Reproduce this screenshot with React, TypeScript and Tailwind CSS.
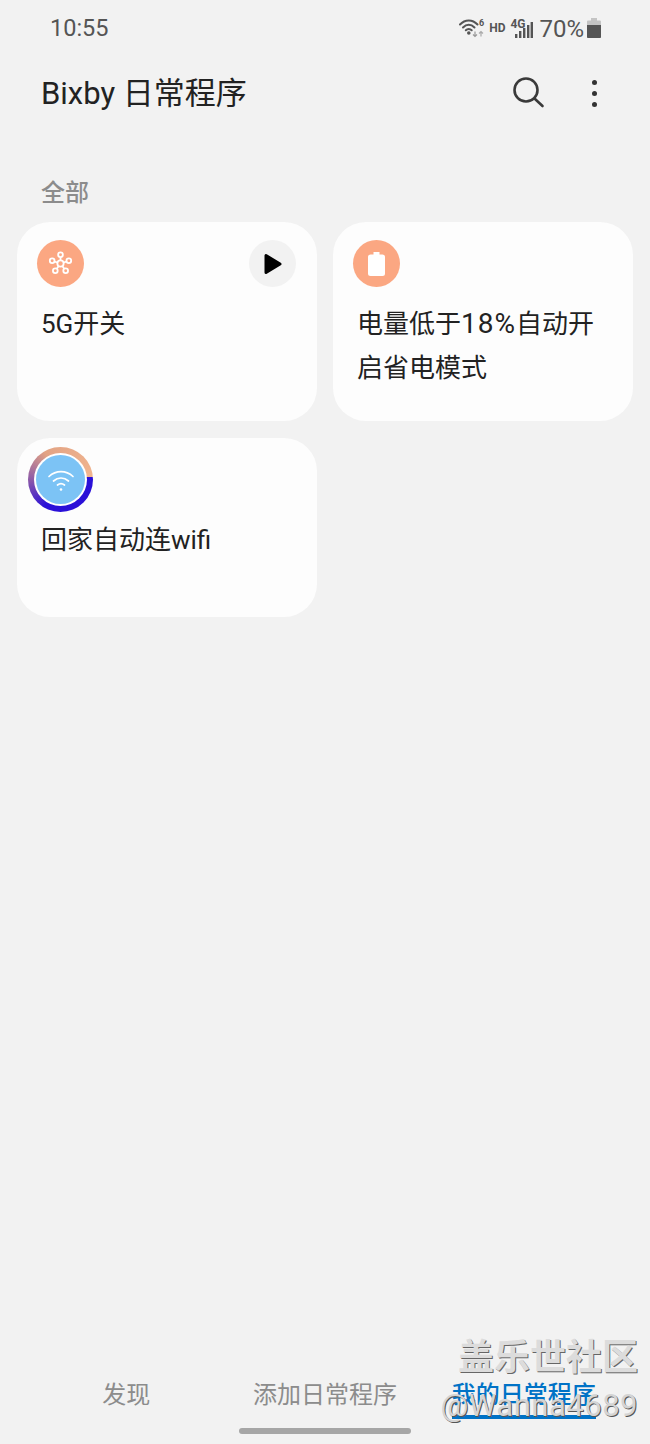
const cjk = "font-['Roboto','Noto_Sans_CJK_SC',sans-serif]"

function WifiStatus() {
  return (
    <svg width="26" height="20" viewBox="0 0 26 20" fill="none" className="text-[#555]">
      <g stroke="currentColor" strokeWidth="2" strokeLinecap="round">
        <path d="M1 6.500C6 1 13.500 1 18.500 6.500" />
        <path d="M4 9.500C7.500 5.800 12 5.800 15.500 9.500" />
        <path d="M6.800 12.300C8.500 10.600 11 10.600 12.700 12.300" />
      </g>
      <circle cx="9.800" cy="15" r="1.800" fill="currentColor" />
      <path d="M16 13.500v5M14 16.500l2 2 2-2" stroke="#999" strokeWidth="1.200" fill="none" />
      <path d="M22 18.500v-5M20 15.500l2-2 2 2" stroke="#aaa" strokeWidth="1.200" fill="none" />
      <text x="20" y="8" fontSize="9" fontWeight="700" fill="#555" fontFamily="Roboto, sans-serif">6</text>
    </svg>
  )
}

function SignalBars() {
  return (
    <svg width="18" height="16" viewBox="0 0 18 16" fill="#555">
      <rect x="0" y="12" width="2.400" height="4" />
      <rect x="4" y="9" width="2.400" height="7" />
      <rect x="8" y="6" width="2.400" height="10" />
      <rect x="12" y="3" width="2.400" height="13" />
      <rect x="15.600" y="0" width="2.400" height="16" />
    </svg>
  )
}

function HubIcon() {
  const spots = [
    [12, 4.2],
    [19.4, 9.6],
    [16.6, 18.4],
    [7.4, 18.4],
    [4.6, 9.6],
  ]
  return (
    <svg width="27" height="27" viewBox="0 0 24 24" fill="none" stroke="white" strokeWidth="1.600">
      {spots.map(([x, y]) => (
        <line key={x + "-" + y} x1="12" y1="12" x2={x} y2={y} />
      ))}
      <circle cx="12" cy="12" r="2.800" fill="#fba782" />
      {spots.map(([x, y]) => (
        <circle key={x + "/" + y} cx={x} cy={y} r="2.100" fill="#fba782" />
      ))}
    </svg>
  )
}

function Card({ height, icon, action, children }: { height: string; icon: React.ReactNode; action?: React.ReactNode; children: React.ReactNode }) {
  return (
    <div className={`${height} rounded-[33px] bg-[#fdfdfd] pt-[18px] pl-5 pr-[21px]`}>
      <div className="flex items-center justify-between">
        {icon}
        {action}
      </div>
      <p className="mt-[15px] pl-1 text-[26px] leading-[44px] text-[#222]">{children}</p>
    </div>
  )
}

export default function App() {
  return (
    <div className={`relative flex h-[1444px] w-[650px] flex-col overflow-hidden bg-[#f2f2f2] ${cjk}`}>
      {/* status bar */}
      <div className="flex h-[56px] items-center justify-between pl-[50px] pr-[49px] text-[#555]">
        <span className="mt-[2px] text-[23.500px]">10:55</span>
        <div className="flex items-center">
          <WifiStatus />
          <span className="ml-[4px] text-[12px] font-bold">HD</span>
          <div className="relative ml-[5px] h-[20px] w-[23px]">
            <span className="absolute left-0 top-[-3px] text-[12px] font-bold">4G</span>
            <div className="absolute bottom-0 right-0">
              <SignalBars />
            </div>
          </div>
          <span className="ml-[6px] mt-[1px] text-[24px]">70%</span>
          <svg width="14" height="20" viewBox="0 0 14 20" className="ml-[3px]">
            <path d="M4 0h6v2.500h3a1 1 0 0 1 1 1V19a1 1 0 0 1-1 1H1a1 1 0 0 1-1-1V3.500a1 1 0 0 1 1-1h3z" fill="#c4c4c4" />
            <path d="M0 7h14v12a1 1 0 0 1-1 1H1a1 1 0 0 1-1-1z" fill="#555" />
          </svg>
        </div>
      </div>

      {/* title row */}
      <div className="flex h-[74px] items-center justify-between pl-[41px] pr-[53px]">
        <h1 className="mt-[2px] text-[31px] font-normal text-[#222]">Bixby 日常程序</h1>
        <div className="flex items-center gap-[47px]">
          <svg width="34" height="34" viewBox="0 0 34 34" fill="none" stroke="#3a3a3a" strokeWidth="2.600" strokeLinecap="round">
            <circle cx="15" cy="14" r="11.500" />
            <line x1="23.500" y1="22.500" x2="31.500" y2="30" />
          </svg>
          <div className="flex flex-col gap-[6px]">
            <span className="h-[5px] w-[5px] rounded-full bg-[#333]" />
            <span className="h-[5px] w-[5px] rounded-full bg-[#333]" />
            <span className="h-[5px] w-[5px] rounded-full bg-[#333]" />
          </div>
        </div>
      </div>

      <h2 className="mt-[46px] pl-[41px] text-[24px] font-medium leading-[34px] text-[#8c8c8c]">全部</h2>

      <div className="mt-[12px] grid grid-cols-2 gap-x-4 gap-y-[17px] px-[17px]">
        <Card
          height="h-[199px]"
          icon={
            <div className="flex h-[47px] w-[47px] items-center justify-center rounded-full bg-[#fba782]">
              <HubIcon />
            </div>
          }
          action={
            <div className="flex h-[47px] w-[47px] items-center justify-center rounded-full bg-[#f2f2f2]">
              <svg width="18" height="22" viewBox="0 0 18 22">
                <path d="M2 2.500v17L16 11z" fill="black" stroke="black" strokeWidth="3" strokeLinejoin="round" />
              </svg>
            </div>
          }
        >
          5G开关
        </Card>
        <Card
          height="h-[199px]"
          icon={
            <div className="flex h-[47px] w-[47px] items-center justify-center rounded-full bg-[#fba782]">
              <svg width="17" height="24" viewBox="0 0 17 24" fill="white">
                <path d="M5.500 0h6v2.500h3a2.500 2.500 0 0 1 2.500 2.500v16.500a2.500 2.500 0 0 1-2.500 2.500h-12A2.500 2.500 0 0 1 0 21.500V5a2.500 2.500 0 0 1 2.500-2.500h3z" />
              </svg>
            </div>
          }
        >
          电量低于<span className="text-[28px] tracking-[1px]">18%</span>自动开启省电模式
        </Card>
        <Card
          height="h-[179px]"
          icon={
            <div className="relative flex h-[47px] w-[47px] items-center justify-center">
              {/* progress ring, runs past the icon */}
              <div className="absolute left-[-9px] top-[-9px] h-[65px] w-[65px] rounded-full bg-[conic-gradient(from_85deg,#2a10d8_0deg,#2a10d8_125deg,#8d5aa8_185deg,#e2a384_245deg,#f0b48f_355deg,#f0b48f_360deg)]" />
              <div className="absolute left-[-3px] top-[-3px] h-[53px] w-[53px] rounded-full bg-white" />
              <div className="absolute left-[-1px] top-[-1px] flex h-[49px] w-[49px] items-center justify-center rounded-full bg-[#7cc3f5]">
                <svg width="30" height="26" viewBox="0 0 30 26" fill="none" stroke="white" strokeWidth="1.700" strokeLinecap="round">
                  <path d="M3 9.500C10 3 20 3 27 9.500" />
                  <path d="M7.500 14C12 10 18 10 22.500 14" />
                  <path d="M11.500 18C13.500 16.500 16.500 16.500 18.500 18" />
                  <circle cx="15" cy="22.500" r="1.300" fill="white" stroke="none" />
                </svg>
              </div>
            </div>
          }
        >
          回家自动连wifi
        </Card>
      </div>

      {/* bottom tabs */}
      <div className="mt-auto grid grid-cols-3 px-[27px] pb-[9px] text-[24px] leading-[40px] text-[#8c8c8c]">
        <span className="text-center">发现</span>
        <span className="text-center">添加日常程序</span>
        <div className="flex justify-center">
          <span className="border-b-[4px] border-[#0072c6] font-medium text-[#0072c6]">我的日常程序</span>
        </div>
      </div>
      <div className="mx-auto mb-[10px] h-[6px] w-[172px] rounded-full bg-[#a6a6a6]" />

      {/* watermark */}
      <div className="absolute right-[12px] top-[1337px] flex flex-col items-end">
        <span className="text-[36px] font-bold leading-[42px] text-[#dcdcdc] [text-shadow:1px_1px_0_#666]">盖乐世社区</span>
        <span className="mt-[8px] text-[31px] leading-[38px] tracking-[0.500px] text-[#d4d4d4] [text-shadow:1px_1px_0_#555]">@Wanna4689</span>
      </div>
    </div>
  )
}
